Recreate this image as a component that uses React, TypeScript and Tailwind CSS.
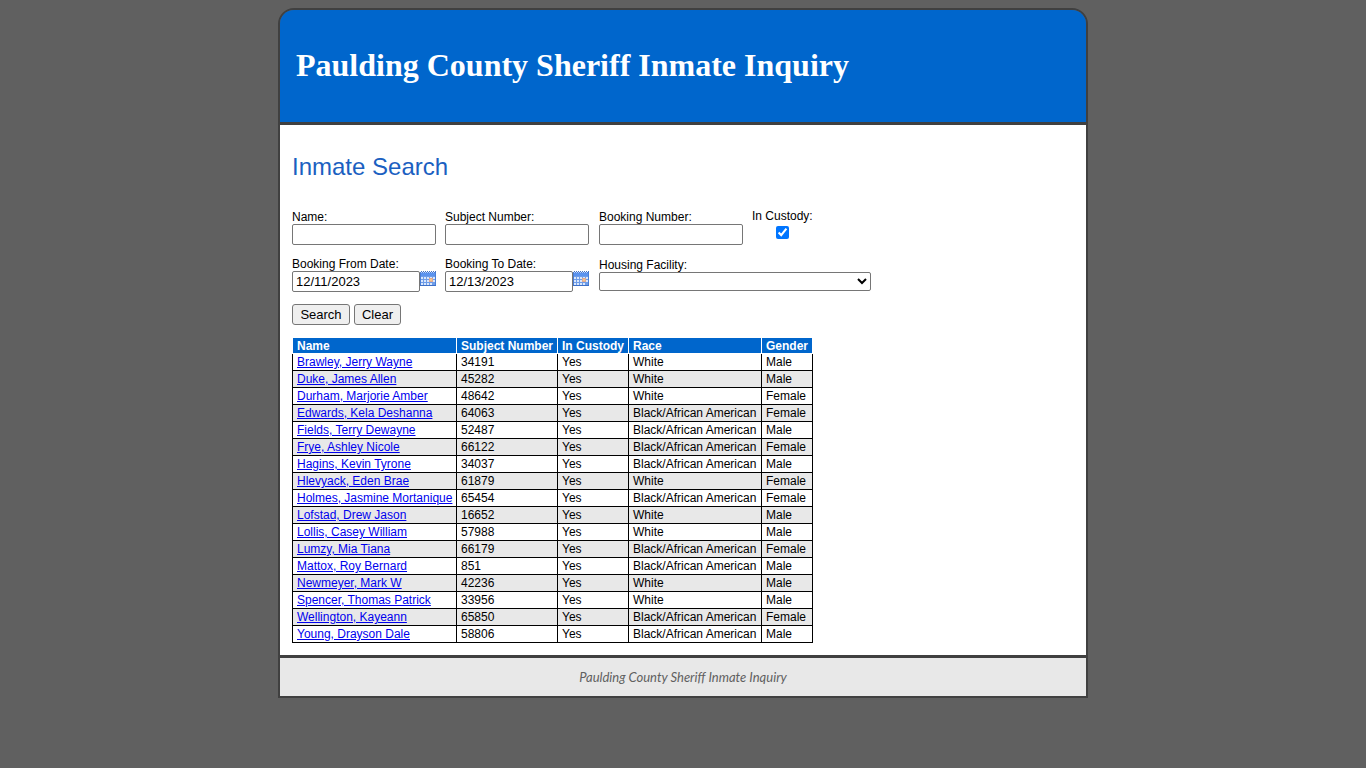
interface Inmate {
  name: string;
  subject: string;
  race: string;
  gender: string;
}

const WHITE = 'White';
const BLACK = 'Black/African American';

const inmates: Inmate[] = [
  { name: 'Brawley, Jerry Wayne', subject: '34191', race: WHITE, gender: 'Male' },
  { name: 'Duke, James Allen', subject: '45282', race: WHITE, gender: 'Male' },
  { name: 'Durham, Marjorie Amber', subject: '48642', race: WHITE, gender: 'Female' },
  { name: 'Edwards, Kela Deshanna', subject: '64063', race: BLACK, gender: 'Female' },
  { name: 'Fields, Terry Dewayne', subject: '52487', race: BLACK, gender: 'Male' },
  { name: 'Frye, Ashley Nicole', subject: '66122', race: BLACK, gender: 'Female' },
  { name: 'Hagins, Kevin Tyrone', subject: '34037', race: BLACK, gender: 'Male' },
  { name: 'Hlevyack, Eden Brae', subject: '61879', race: WHITE, gender: 'Female' },
  { name: 'Holmes, Jasmine Mortanique', subject: '65454', race: BLACK, gender: 'Female' },
  { name: 'Lofstad, Drew Jason', subject: '16652', race: WHITE, gender: 'Male' },
  { name: 'Lollis, Casey William', subject: '57988', race: WHITE, gender: 'Male' },
  { name: 'Lumzy, Mia Tiana', subject: '66179', race: BLACK, gender: 'Female' },
  { name: 'Mattox, Roy Bernard', subject: '851', race: BLACK, gender: 'Male' },
  { name: 'Newmeyer, Mark W', subject: '42236', race: WHITE, gender: 'Male' },
  { name: 'Spencer, Thomas Patrick', subject: '33956', race: WHITE, gender: 'Male' },
  { name: 'Wellington, Kayeann', subject: '65850', race: BLACK, gender: 'Female' },
  { name: 'Young, Drayson Dale', subject: '58806', race: BLACK, gender: 'Male' },
];

const columns = [
  { label: 'Name', width: 'w-[164px]' },
  { label: 'Subject Number', width: 'w-[101px]' },
  { label: 'In Custody', width: 'w-[71px]' },
  { label: 'Race', width: 'w-[133px]' },
  { label: 'Gender', width: 'w-[51px]' },
];

const inputClass = 'h-[21px] rounded-[2px] border border-[#767676] bg-white px-[3px] text-[13px] text-black';
const buttonClass = 'h-[21px] rounded-[3px] border border-[#767676] bg-[#efefef] text-[13px] leading-4 text-black';

function CalendarIcon() {
  return (
    <svg width="16" height="16" viewBox="0 0 16 16" shapeRendering="crispEdges" aria-hidden="true">
      <rect y="1" width="16" height="14" fill="#4a7fd8" />
      <rect x="1" y="2" width="14" height="3" fill="#5b93ee" />
      <path d="M1 .5h1M3 .5h1M5 .5h1M7 .5h1M9 .5h1M11 .5h1M13 .5h1M15 .5h1" stroke="#4272c4" />
      <path d="M1 1.5h1M3 1.5h1M5 1.5h1M7 1.5h1M9 1.5h1M11 1.5h1M13 1.5h1" stroke="#b9d0fa" />
      <rect x="1" y="5" width="14" height="9" fill="#6f9de8" />
      <path
        d="M1 6h2v2H1zM4 6h2v2H4zM7 6h2v2H7zM10 6h2v2h-2zM13 6h2v2h-2zM1 9h2v2H1zM4 9h2v2H4zM7 9h2v2H7zM13 9h2v2h-2zM1 12h2v2H1zM4 12h2v2H4zM7 12h2v2H7zM10 12h2v2h-2z"
        fill="#d9e7fc"
      />
      <rect x="9" y="7" width="4" height="4" fill="#e0a890" />
      <rect x="10" y="8" width="2" height="2" fill="#f7c888" />
      <rect y="14" width="16" height="1" fill="#3d6fc6" />
    </svg>
  );
}

function TextField({ id, label }: { id: string; label: string }) {
  return (
    <div className="flex flex-col items-start pt-px">
      <label htmlFor={id}>{label}</label>
      <input id={id} type="text" className={`w-36 ${inputClass}`} />
    </div>
  );
}

function DateField({ id, label, value }: { id: string; label: string; value: string }) {
  return (
    <div>
      <label htmlFor={id} className="block">
        {label}
      </label>
      <div className="flex w-36 items-start">
        <input id={id} type="text" defaultValue={value} className={`w-32 ${inputClass}`} />
        <button type="button" aria-label={`Pick ${label}`}>
          <CalendarIcon />
        </button>
      </div>
    </div>
  );
}

export default function App() {
  return (
    <div className="min-h-screen bg-[#606060] pt-2 font-['Liberation_Sans',Arial,sans-serif] text-xs leading-[14px] text-black">
      <div className="mx-auto max-w-[810px] overflow-hidden rounded-t-[16px] border-2 border-[#404040]">
        <header className="border-b-[3px] border-[#404040] bg-[#0066cc] px-4 pt-9 pb-[38px]">
          <h1 className="font-['Liberation_Serif','Times_New_Roman',serif] text-[32px] leading-[38px] font-bold text-white">
            Paulding County Sheriff Inmate Inquiry
          </h1>
        </header>

        <main className="bg-white px-3 pt-7 pb-3">
          <h2 className="text-2xl leading-7 text-[#1b5fc1]">Inmate Search</h2>

          <form className="pt-7" onSubmit={(e) => e.preventDefault()}>
            <div className="grid grid-cols-[144px_145px_144px_auto] justify-start gap-x-[9px] gap-y-3">
              <TextField id="name" label="Name:" />
              <TextField id="subject-number" label="Subject Number:" />
              <TextField id="booking-number" label="Booking Number:" />
              <div className="flex flex-col items-center gap-[3px] justify-self-start">
                <label htmlFor="in-custody">In Custody:</label>
                <input id="in-custody" type="checkbox" defaultChecked className="size-[13px]" />
              </div>
              <DateField id="from-date" label="Booking From Date:" value="12/11/2023" />
              <DateField id="to-date" label="Booking To Date:" value="12/13/2023" />
              <div className="col-span-2 pt-px">
                <label htmlFor="facility" className="block">
                  Housing Facility:
                </label>
                <select
                  id="facility"
                  className="block h-[19px] w-[272px] rounded-[2px] border border-[#767676] bg-white text-[13px]"
                >
                  <option></option>
                </select>
              </div>
            </div>
            <div className="mt-3 flex gap-1">
              <button type="submit" className={`w-[58px] ${buttonClass}`}>
                Search
              </button>
              <button type="reset" className={`w-[47px] ${buttonClass}`}>
                Clear
              </button>
            </div>
          </form>

          <table className="mt-3 w-[521px] table-fixed border-collapse">
            <thead>
              <tr className="h-4 bg-[#0066cc] text-left text-white">
                {columns.map((col) => (
                  <th key={col.label} className={`border border-white px-1 py-0 whitespace-nowrap ${col.width}`}>
                    {col.label}
                  </th>
                ))}
              </tr>
            </thead>
            <tbody>
              {inmates.map((inmate) => (
                <tr key={inmate.subject} className="h-[17px] even:bg-[#e8e8e8]">
                  <td className="border border-black px-1 py-0 whitespace-nowrap">
                    <a href="#" className="text-[#0000ee] underline">
                      {inmate.name}
                    </a>
                  </td>
                  <td className="border border-black px-1 py-0">{inmate.subject}</td>
                  <td className="border border-black px-1 py-0">Yes</td>
                  <td className="border border-black px-1 py-0 whitespace-nowrap">{inmate.race}</td>
                  <td className="border border-black px-1 py-0">{inmate.gender}</td>
                </tr>
              ))}
            </tbody>
          </table>
        </main>

        <footer className="border-t-[3px] border-[#404040] bg-[#e8e8e8] py-3 text-center font-['Trebuchet_MS',Lato,sans-serif] text-[13px] leading-[14px] text-[#606060] italic">
          Paulding County Sheriff Inmate Inquiry
        </footer>
      </div>
    </div>
  );
}
